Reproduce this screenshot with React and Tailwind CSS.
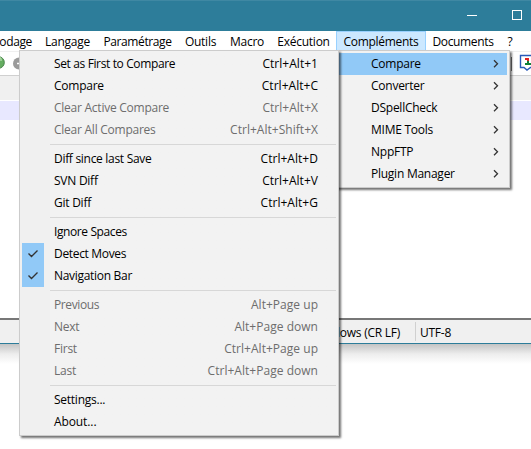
const menuGroups = [
  [
    { label: 'Set as First to Compare', keys: 'Ctrl+Alt+1', tracking: 'tracking-[-0.37px]' },
    { label: 'Compare', keys: 'Ctrl+Alt+C' },
    { label: 'Clear Active Compare', keys: 'Ctrl+Alt+X', disabled: true },
    { label: 'Clear All Compares', keys: 'Ctrl+Alt+Shift+X', disabled: true },
  ],
  [
    { label: 'Diff since last Save', keys: 'Ctrl+Alt+D', tracking: 'tracking-[-0.3px]' },
    { label: 'SVN Diff', keys: 'Ctrl+Alt+V' },
    { label: 'Git Diff', keys: 'Ctrl+Alt+G' },
  ],
  [
    { label: 'Ignore Spaces', tracking: 'tracking-[-0.4px]' },
    { label: 'Detect Moves', checked: true, tracking: 'tracking-[-0.33px]' },
    { label: 'Navigation Bar', checked: true, tracking: 'tracking-[-0.3px]' },
  ],
  [
    { label: 'Previous', keys: 'Alt+Page up', disabled: true, tracking: 'tracking-[-0.4px]' },
    { label: 'Next', keys: 'Alt+Page down', disabled: true },
    { label: 'First', keys: 'Ctrl+Alt+Page up', disabled: true },
    { label: 'Last', keys: 'Ctrl+Alt+Page down', disabled: true },
  ],
  [{ label: 'Settings...' }, { label: 'About...', tracking: 'tracking-[-0.1px]' }],
];

const plugins = ['Compare', 'Converter', 'DSpellCheck', 'MIME Tools', 'NppFTP', 'Plugin Manager'];

const barItems = [
  { label: 'Langage', width: 'w-[59px]' },
  { label: 'Paramétrage', width: 'w-[81px]', tracking: 'tracking-[-0.4px]' },
  { label: 'Outils', width: 'w-[45px]' },
  { label: 'Macro', width: 'w-[48px]' },
  { label: 'Exécution', width: 'w-[65px]' },
  { label: 'Compléments', width: 'w-[90px]', open: true, tracking: 'tracking-[-0.3px]' },
  { label: 'Documents', width: 'w-[74px]', tracking: 'tracking-[-0.35px]' },
  { label: '?', width: 'w-[20px]' },
];

function Check() {
  return (
    <svg width="22" height="22" viewBox="0 0 22 22" fill="none">
      <path d="M6.5 10.5l3 3 6-6" stroke="#333" strokeWidth="1.4" />
    </svg>
  );
}

function MenuRow({ item }) {
  return (
    <div className={`flex h-[22px] items-center ${item.disabled ? 'text-[#6d6d6d]' : 'text-black'}`}>
      <div className={`h-[22px] w-[22px] ${item.checked ? 'bg-[#91c9f7]' : ''}`}>{item.checked && <Check />}</div>
      <span className={`ml-[10px] flex-1 ${item.tracking ?? ''}`}>{item.label}</span>
      <span className="mr-[18px] tracking-[0.03px]">{item.keys}</span>
    </div>
  );
}

function TitleBar() {
  return (
    <div className="flex h-[31px] items-start justify-end border-t border-[#3f88a3] bg-[#2d7d9a]">
      <svg width="64" height="30" viewBox="0 0 64 30" fill="none" stroke="#fff" shapeRendering="crispEdges">
        <path d="M0 14.5h10" />
        <path d="M45.5 9.5h9v9h-9z" />
      </svg>
    </div>
  );
}

function MenuBar() {
  return (
    <div className="flex h-5 items-center bg-white leading-[19px]">
      <div className="flex h-5 w-[38px] items-center justify-end pr-[6px] tracking-[-0.35px]">odage</div>
      {barItems.map((item) => (
        <div
          key={item.label}
          className={`flex h-5 shrink-0 items-center justify-center whitespace-nowrap ${item.width} ${item.tracking ?? ''} ${
            item.open ? 'border border-[#99d1ff] bg-[#cce8ff]' : ''
          }`}
        >
          {item.label}
        </div>
      ))}
    </div>
  );
}

function ToolBar() {
  return (
    <div className="flex h-6 items-start justify-between overflow-hidden border-t border-[#f0f0f0] bg-white">
      <svg width="30" height="24" viewBox="0 0 30 24">
        <circle cx="-1.5" cy="10.5" r="5.8" fill="#65ad61" stroke="#468348" />
        <path d="M-4 7q3-3 5 0v2" fill="none" stroke="#a9d8a2" strokeWidth="1.5" />
        <circle cx="19" cy="11.5" r="6" fill="#9b9b9b" />
        <path d="M17 11.5h5" stroke="#fff" strokeWidth="1.5" />
      </svg>
      <svg width="21" height="24" viewBox="0 0 21 24">
        <path d="M1.5 5v14" stroke="#777" />
        <path d="M10.5 3.5H24v12h-3.5L17 18l-3-2.5h-3.5z" fill="#fff" stroke="#2859b8" strokeWidth="1.4" />
        <path d="M15 6h4v3h-2V8h-2z" fill="#e02020" />
        <path d="M17 9h2v2h2v2h-6v-2h2z" fill="#128038" />
      </svg>
    </div>
  );
}

export default function App() {
  return (
    <div className="relative flex h-[449px] w-[531px] flex-col overflow-hidden bg-white font-['Open_Sans','Noto_Sans',sans-serif] text-[12px] tracking-[-0.25px] text-black">
      <TitleBar />
      <MenuBar />
      <ToolBar />
      <div className="h-[25px] border-t border-[#d0d0d0] bg-[#f0f0f0]" />
      <div className="h-px bg-white" />
      <div className="h-[19px] bg-[#e8e8ff]" />
      <div className="h-[198px] bg-white" />
      <div className="flex h-[26px] shrink-0 border-t-2 border-b border-t-[#777] border-b-[#2d7d9a] bg-[#f0f0f0] leading-[25px]">
        <div className="my-[2px] flex w-[416px] items-center justify-end border-r border-[#d0d0d0] pt-[2px] pr-[15px]">Windows (CR LF)</div>
        <span className="pl-[4px]">UTF-8</span>
      </div>
      <div className="h-[20px] bg-linear-to-b from-[#c4c4c4] via-[#ededed] to-white" />

      <div className="absolute top-[50px] left-[336px] w-[174px] border border-[#ccc] bg-[#f2f2f2] p-[2px] shadow-[2px_2px_2px_rgba(0,0,0,0.55)]">
        {plugins.map((name, i) => (
          <div key={name} className={`flex h-[22px] items-center justify-between pr-[8px] pl-[32px] ${i === 0 ? 'bg-[#91c9f7]' : ''}`}>
            <span>{name}</span>
            <svg width="6" height="10" viewBox="0 0 6 10" fill="none" stroke="#333" strokeWidth="1.3">
              <path d="M1 1.2l3.5 3.5L1 8.2" />
            </svg>
          </div>
        ))}
      </div>

      <div className="absolute top-[50px] left-[19px] w-[320px] border border-[#ccc] bg-[#f2f2f2] bg-linear-to-r from-[#f0f0f0] from-[30px] to-[#f2f2f2] to-[30px] p-[2px] shadow-[2px_2px_2px_rgba(0,0,0,0.55)]">
        {menuGroups.map((group, g) => (
          <div key={g}>
            {g > 0 && (
              <div className="flex h-[7px] items-center pl-[28px]">
                <div className="h-px flex-1 bg-[#d7d7d7]" />
              </div>
            )}
            {group.map((item) => (
              <MenuRow key={item.label} item={item} />
            ))}
          </div>
        ))}
      </div>
    </div>
  );
}
